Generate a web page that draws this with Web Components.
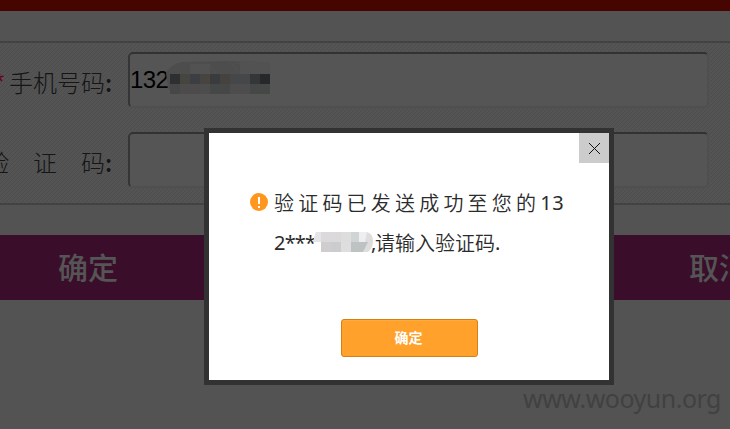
<!DOCTYPE html>
<html lang="zh-CN"><head><meta charset="utf-8"><title>验证码</title>
<style>html,body{margin:0;width:730px;height:429px;overflow:hidden;background:#535353}</style></head>
<body><verify-page></verify-page>
<script>
const define = (name, markup) => {
  const template = document.createElement('template');
  template.innerHTML = markup;
  customElements.define(name, class extends HTMLElement {
    constructor() {
      super();
      this.attachShadow({mode: 'open'}).append(template.content.cloneNode(true));
    }
  });
};

define('form-row', `<style>
:host{display:grid;grid-template-columns:128px 581px;height:56px}
.label{display:flex;justify-content:flex-end;color:#151515;font:300 24px/60px "Noto Sans CJK SC",sans-serif;white-space:pre}
::slotted([slot=label]){flex:none}
.field{box-sizing:border-box;height:56px;border:2px solid #4f4f4f;border-top-color:#323232;border-left-color:#353535;border-radius:5px;background:#555;display:flex;align-items:center;font:24px/50px "Liberation Sans",Arial,sans-serif;letter-spacing:-.6px;color:#000}
</style><div class="label"><slot name="label"></slot></div><div class="field"><slot></slot></div>`);

define('pixel-mask', `<style>:host{display:block}svg{display:block}</style>
<svg width="104" height="34" viewBox="0 0 104 34">
<path d="M0 12Q5 3 16 1L60 0L100 1L104 5V33H7L2 27Z" fill="#4d4d4d"/>
<path d="M24 3h20v10H24zM74 1h30v12H74z" fill="#525252"/>
<path d="M4 13h10v10H4z" fill="#2e2f30"/><path d="M14 13h10v10H14z" fill="#47453f"/><path d="M24 13h10v10H24z" fill="#3c3e42"/><path d="M34 13h10v10H34z" fill="#48443f"/><path d="M44 13h10v10H44z" fill="#393b3d"/><path d="M54 13h10v10H54z" fill="#46433f"/><path d="M64 13h20v10H64z" fill="#454748"/><path d="M84 13h10v10H84z" fill="#353638"/><path d="M94 13h10v10H94z" fill="#272829"/>
<path d="M4 23h10v10H4zM44 23h20v10H44zM84 23h20v10H84z" fill="#454846"/><path d="M14 23h20v10H14z" fill="#4d4b4b"/>
<path d="M42 3q8 6 8 10M64 1q6 5 8 12M72 1q6 6 7 12" fill="none" stroke="#555" opacity=".5"/>
</svg>`);

define('mask-light', `<style>:host{display:block}svg{display:block}</style>
<svg width="61" height="21" viewBox="0 0 61 21">
<path d="M3 0H54Q60 2 60 9T55 20H8V10H0Z" fill="#ddd"/>
<path d="M0 10L3 0H8V10z" fill="#e5e5e7"/><path d="M8 0h20v10H8z" fill="#dbd9dc"/><path d="M8 10h10v10H8z" fill="#d0cdcf"/><path d="M18 10h10v10H18z" fill="#cbcccd"/><path d="M28 10h10v10H28z" fill="#dedede"/><path d="M38 10h17l-5 10H38z" fill="#bfc2c2"/><path d="M38 0h8v10h-8z" fill="#cfd4d4"/><path d="M46 0h8l-2 10h-6z" fill="#eee"/>
</svg>`);

define('page-action', `<style>:host{display:block;height:65px;background:#3a0e2b;color:#555;font:500 30px/62px "Noto Sans CJK SC",sans-serif;white-space:nowrap}</style><slot></slot>`);

define('alert-icon', `<style>:host{display:block}svg{display:block}</style><svg width="18" height="18" viewBox="0 0 18 18"><circle cx="9" cy="9" r="9" fill="#ff961e"/><path d="M8 4h2v7H8zM8 13h2v2H8z" fill="#fff"/></svg>`);

define('close-button', `<style>:host{display:grid;place-items:center;width:30px;height:30px;background:#ccc}svg{margin:1px 0 0 1px}</style><svg width="11" height="11" viewBox="0 0 11 11"><path d="M0 0l11 11M11 0L0 11" stroke="#111" stroke-width="1"/></svg>`);

define('message-dialog', `<style>
:host{position:absolute;left:204px;top:128px;box-sizing:border-box;width:410px;height:257px;border:5px solid #323232;background:#fff;display:flex;flex-direction:column}
close-button{align-self:flex-end}
.message{display:grid;grid-template-columns:18px 1fr;column-gap:6px;padding:20px 0 0 41px;height:96px;font:400 20px/40px "Noto Sans","Noto Sans CJK SC",sans-serif;color:#2b2b2b;box-sizing:border-box}
alert-icon{margin-top:10px}
.line{display:flex;height:40px;white-space:nowrap}
.first{letter-spacing:4.2px}.first .n{letter-spacing:.6px}
.cjk{font-family:"Noto Sans CJK SC",sans-serif;font-weight:350}
.prefix{width:39px;letter-spacing:-.8px}.tail{width:4px;margin-left:-3px}
mask-light{margin-top:9px}
button{align-self:center;margin-top:60px;margin-left:1px;box-sizing:border-box;width:137px;height:38px;padding:0 2px 1px 0;border:1px solid #d58014;border-radius:3px;background:#ffa12b;box-shadow:inset 0 1px #ffaa3d;color:#fff;font:700 14px/35px "Noto Sans CJK SC",sans-serif}
</style><close-button></close-button><div class="message"><alert-icon></alert-icon><div>
<div class="line first"><span class="cjk">验证码已发送成功至您的</span><span class="n">13</span></div>
<div class="line"><span class="prefix">2***</span><mask-light></mask-light><span class="tail">,</span><span class="cjk">请输入验证码</span><span>.</span></div>
</div></div><button>确定</button>`);

define('verify-page', `<style>
:host{display:block;position:relative;width:730px;height:429px;overflow:hidden;background:#535353}
.bar{height:11px;background:#460500}
.form{box-sizing:border-box;margin-top:30px;height:164px;border-top:2px solid #434343;border-bottom:2px solid #434343;padding-top:9px;display:grid;row-gap:24px;align-content:start;background:repeating-linear-gradient(135deg,#4d4d4d 0 1px,#545454 1px 2.83px)}
.star{color:#670018;margin-right:5px;font-family:"Liberation Sans",sans-serif}.colon{width:23px;font-weight:500}
pixel-mask{margin-left:-2px;margin-top:-5px}
.actions{margin-top:30px;display:grid;grid-template-columns:614px 116px}
page-action:first-child{padding-left:58px}page-action:last-child{padding-left:75px}
footer{margin-top:81px;display:flex;justify-content:flex-end;padding-right:9px;color:#414141;font:25px/34px "Noto Sans",sans-serif;letter-spacing:-.5px}
</style><div class="bar"></div><section class="form">
<form-row><span slot="label" class="star">*</span><span slot="label">手机号码</span><span slot="label" class="colon">:</span>132<pixel-mask></pixel-mask></form-row>
<form-row><span slot="label" style="word-spacing:18.6px">验 证 码</span><span slot="label" class="colon">:</span></form-row>
</section><div class="actions"><page-action>确定</page-action><page-action>取消</page-action></div>
<footer>www.wooyun.org</footer><message-dialog></message-dialog>`);
</script></body></html>
